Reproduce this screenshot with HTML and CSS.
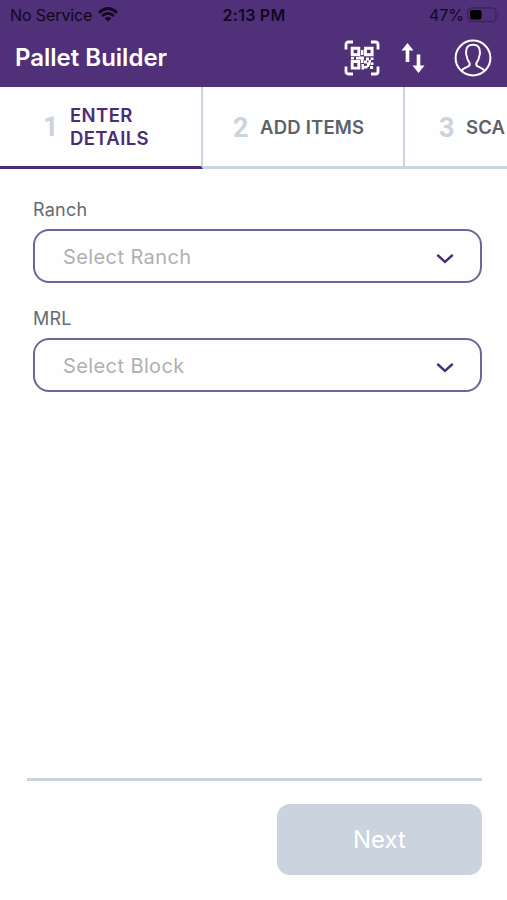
FILE: index.html
```
<!DOCTYPE html>
<html lang="en">
<head>
  <meta charset="UTF-8">
  <meta name="viewport" content="width=device-width, initial-scale=1.0">
  <title>Pallet Builder</title>
  <link rel="stylesheet" href="styles.css">
</head>
<body>
  <div class="app">
    <header class="header">
      <div class="status">
        <div class="carrier">
          <span>No Service</span>
          <svg class="wifi" width="20" height="15" viewBox="0 0 20 15">
            <path d="M1 5.6Q10-2.6 19 5.6" fill="none" stroke="#110720" stroke-width="2.8"/>
            <path d="M4 9Q10 3.6 16 9" fill="none" stroke="#110720" stroke-width="2.6"/>
            <path d="M6.600 11.200Q10 8.200 13.400 11.200L10 14.600Z" fill="#110720"/>
          </svg>
        </div>
        <div class="time">2:13 PM</div>
        <div class="power">
          <span>47%</span>
          <svg width="33" height="16" viewBox="0 0 33 16">
            <rect x="1" y="1" width="28" height="13.5" rx="4" fill="none" stroke="#3a2160" stroke-width="1.3"/>
            <rect x="3" y="3" width="11.5" height="9.5" rx="2" fill="#000"/>
            <path d="M30.600 5.500q2 2.200 0 4.500z" fill="#3a2160"/>
          </svg>
        </div>
      </div>
      <div class="bar">
        <h1 class="title">Pallet Builder</h1>
        <div class="actions">
          <svg class="qr" width="36" height="36" viewBox="0 0 36 36" fill="none" stroke="#fff">
            <path d="M2 9.500V4.500Q2 2 4.500 2H9M27 2h4.500Q34 2 34 4.500V9.500M34 26.500v5Q34 34 31.500 34H27M9 34H4.500Q2 34 2 31.500v-5" stroke-width="2.800"/>
            <path d="M8.200 8.200h6.600v6.600H8.200zM21.500 8.200h6.600v6.600h-6.600zM8.200 21.500h6.600v6.600H8.200z" stroke-width="2.900"/>
            <path fill="#fff" stroke="none" d="M17 10h2.500v5H17zM7 17h3v2.500H7zM12 17h3v2.500h-3zM15 16.500h5v3h-5zM17 19h2.500v4H17zM22 17.500h3v3h-3zM26.500 17.500h3V20h-3zM24.500 20h2.500v2.500h-2.500zM20 20.500h3v3h-3zM23 22.500h3v3h-3zM26.500 22.500h3v2.500h-3zM17.500 24h2.500v5.500h-2.500zM20 26h3.500v2.500H20zM22.500 25h2.500v2h-2.500zM26 26h3v3h-3z"/>
          </svg>
          <svg class="arrows" width="24" height="32" viewBox="0 0 24 32" fill="#fff">
            <path d="M6.500 1 12.500 8.500H8.300V20H4.700V8.500H.5ZM17.500 31l-6-7.500h4.200V12.500h3.600v11h4.200Z"/>
          </svg>
          <svg class="user" width="38" height="38" viewBox="0 0 38 38" fill="none" stroke="#fff" stroke-width="2">
            <circle cx="19" cy="19" r="17.400"/>
            <path d="M7.500 31.800C9 29.500 11 28.800 13.800 27.600C16 26.600 16.200 25.600 15.500 23.800C13.500 21.500 13 19.500 12.700 17C11.800 15.500 11.900 14 12.200 12.500C12 8 14.500 5.800 19 5.800S26 8 25.800 12.500C26.100 14 26.200 15.500 25.300 17C25 19.500 24.500 21.500 22.500 23.800C21.800 25.600 22 26.600 24.200 27.600C27 28.800 29 29.500 30.500 31.800"/>
          </svg>
        </div>
      </div>
    </header>

    <nav class="steps">
      <div class="step active">
        <span class="num">1</span>
        <span class="name">ENTER<br>DETAILS</span>
      </div>
      <div class="step">
        <span class="num">2</span>
        <span class="name">ADD ITEMS</span>
      </div>
      <div class="step last">
        <span class="num">3</span>
        <span class="name">SCA</span>
      </div>
    </nav>

    <main class="form">
      <label class="label">Ranch</label>
      <div class="select">
        <span>Select Ranch</span>
        <svg class="chevron" width="18" height="10" viewBox="0 0 18 10"><path d="M2 1.500l7 6.300 7-6.300" fill="none" stroke="#4a2d77" stroke-width="2.400" stroke-linecap="round"/></svg>
      </div>
      <label class="label">MRL</label>
      <div class="select">
        <span>Select Block</span>
        <svg class="chevron" width="18" height="10" viewBox="0 0 18 10"><path d="M2 1.500l7 6.300 7-6.300" fill="none" stroke="#4a2d77" stroke-width="2.400" stroke-linecap="round"/></svg>
      </div>
    </main>

    <footer class="footer">
      <button class="next">Next</button>
    </footer>
  </div>
</body>
</html>
```
FILE: styles.css
```
*{box-sizing:border-box;}
body{margin:0;background:#fefefe;font-family:Inter,"Liberation Sans",sans-serif;}
.app{height:900px;display:flex;flex-direction:column;overflow:hidden;}
svg{display:block;flex:none;}

.header{height:87px;background:#503078;color:#fff;}
.status{display:grid;grid-template-columns:1fr auto 1fr;align-items:center;height:29px;padding:0 7px 0 10px;color:#110720;font-size:16px;}
.carrier,.power{display:flex;align-items:center;}
.carrier{gap:6px;letter-spacing:-.1px;}
.power{justify-content:flex-end;gap:3px;}
.time{margin-right:2px;font-weight:600;letter-spacing:.25px;}
.bar{display:flex;align-items:center;justify-content:space-between;height:57px;padding:0 15px;}
.title{margin:0;font-size:24px;font-weight:600;}
.actions{display:flex;align-items:center;}
.arrows{margin:0 29px 0 21px;}

.steps{display:flex;height:82px;}
.step{flex:none;display:flex;align-items:center;width:202px;padding:2px 0 0 30px;border-right:2px solid #ccd3de;border-bottom:3px solid #ccd3d9;color:#5d6269;}
.step.active{width:203px;padding:1px 0 0 43px;border-bottom-color:#4a2d77;color:#4a2d77;}
.step.last{padding-left:34px;}
.num{width:15px;margin-right:12px;color:#ccd3de;font-family:Roboto,sans-serif;font-weight:700;font-size:27px;}
.name{font-size:18.5px;font-weight:600;line-height:23px;letter-spacing:.2px;}
.active .name{letter-spacing:.4px;}

.form{flex:1;padding:29px 25px 0 33px;}
.label{display:block;height:31px;line-height:24px;font-size:18px;letter-spacing:.25px;color:#646b70;}
.select{display:flex;align-items:center;justify-content:space-between;height:54px;margin-bottom:24px;padding:2px 26px 0 28px;border:2px solid #74629b;border-radius:16px;color:#b0b0b2;font-size:20px;letter-spacing:.4px;}
.chevron{margin-top:3px;}

.footer{display:flex;justify-content:flex-end;height:122px;margin:0 25px 0 27px;padding-top:23px;border-top:3px solid #ccd3d9;}
.next{width:205px;height:71px;border:0;border-radius:13px;background:#cbd3de;color:#fff;font-family:inherit;font-size:24px;}
```
